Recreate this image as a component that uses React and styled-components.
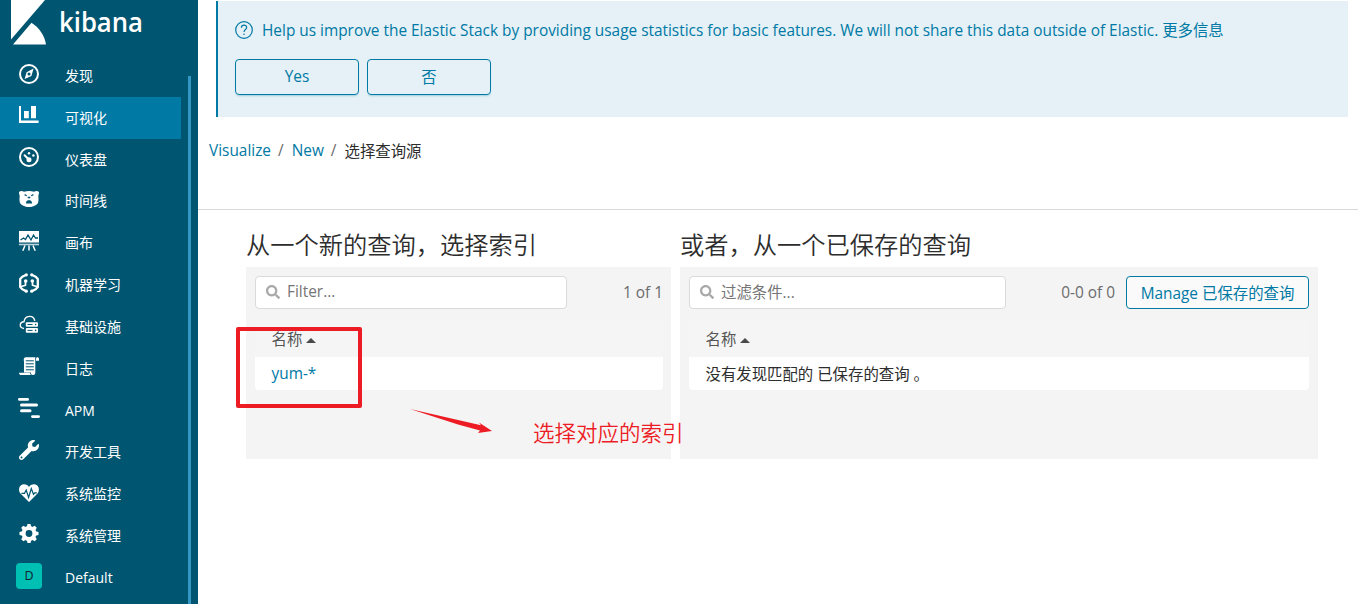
import React from "react";
import styled, { createGlobalStyle } from "styled-components";
import { FaSearch, FaWrench } from "react-icons/fa";

const latin = `"Open Sans", "Noto Sans CJK SC", sans-serif`;
const blue = "#0079a5";

const GlobalStyle = createGlobalStyle`
  * { box-sizing: border-box; }
  body { margin: 0; background: #fff; font-family: ${latin}; font-size: 15.4px; color: #2d2d2d; }
  button, input { font: inherit; }
`;

const Page = styled.div`
  position: relative;
  display: flex;
  width: 1358px;
  height: 604px;
  overflow: hidden;
`;

const Sidebar = styled.nav`
  display: flex;
  flex: 0 0 198px;
  background: #005571;
  color: #fff;
`;
const SidebarContent = styled.div`
  width: 181px;
  margin-right: 7px;
`;
const ScrollThumb = styled.div`
  width: 3px;
  margin-top: 76px;
  background: #3297c2;
`;
const Logo = styled.div`
  height: 55px;
  svg { display: block; }
`;
const NavItem = styled.div`
  display: flex;
  align-items: center;
  height: 41.83px;
  padding-left: 16px;
  background: ${(p) => (p.$active ? blue : "transparent")};
`;
const NavIcon = styled.span`
  display: flex;
  justify-content: center;
  width: 26px;
  margin: 0 23px 4.6px 0;
  svg { display: block; overflow: visible; }
`;
const NavLabel = styled.span`
  font-size: 14px;
  line-height: 20px;
`;
const SpaceBadge = styled.span`
  width: 26px;
  height: 26px;
  border-radius: 4px;
  background: #00bfb3;
  color: #10222b;
  font-size: 12.5px;
  line-height: 25px;
  text-align: center;
`;

const Main = styled.main`
  flex: 1;
  min-width: 0;
`;
const Banner = styled.section`
  height: 116px;
  margin: 1px 10px 0 18px;
  padding: 17px 0 0 17px;
  border-left: 2px solid ${blue};
  background: #e5f1f6;
  color: ${blue};
`;
const BannerTitle = styled.div`
  display: flex;
  align-items: center;
  gap: 9px;
  height: 24px;
  white-space: nowrap;
  span { padding-bottom: 2px; }
  svg { margin-bottom: 1px; }
`;
const BannerActions = styled.div`
  display: flex;
  gap: 8px;
  margin-top: 17px;
`;
const Button = styled.button`
  height: ${(p) => p.$height}px;
  width: ${(p) => p.$width}px;
  padding: 0 0 1px;
  border: 1px solid ${blue};
  border-radius: 4px;
  background: ${(p) => p.$fill || "transparent"};
  box-shadow: ${(p) => (p.$raised ? "0 2px 2px -1px rgba(0, 121, 165, 0.3)" : "none")};
  color: ${blue};
  white-space: nowrap;
`;

const Breadcrumbs = styled.div`
  display: flex;
  align-items: center;
  height: 93px;
  padding: 0 0 25px 11px;
  border-bottom: 1px solid #d9d9d9;
`;
const Crumb = styled.span`
  color: ${(p) => (p.$current ? "#2d2d2d" : blue)};
`;
const Separator = styled.span`
  margin: 0 8px 0 7px;
  color: #6b6b6b;
`;

const Columns = styled.div`
  display: flex;
  gap: 9px;
  padding: 16px 40px 0 48px;
`;
const Column = styled.section`
  width: ${(p) => p.$width}px;
`;
const Title = styled.h2`
  margin: 0;
  height: 41px;
  font-size: 24.25px;
  font-weight: 350;
  line-height: 37px;
  white-space: nowrap;
`;
const Panel = styled.div`
  height: 192px;
  padding: 9px ${(p) => p.$right || 9}px 0 9px;
  background: #f4f4f4;
`;
const Toolbar = styled.div`
  display: flex;
  align-items: center;
  height: 33px;
`;
const Search = styled.div`
  display: flex;
  align-items: center;
  gap: 7px;
  width: ${(p) => p.$width}px;
  height: 33px;
  padding: 0 0 2px 10px;
  border: 1px solid #dadada;
  border-radius: 4px;
  background: #fff;
  color: #757575;
  svg { color: #a9a9a9; }
`;
const Count = styled.span`
  margin: 0 ${(p) => p.$gap || 0}px 0 auto;
  color: #6b6b6b;
`;
const Table = styled.div`
  margin-top: 11px;
  border-radius: 4px;
  overflow: hidden;
`;
const HeaderRow = styled.div`
  display: flex;
  align-items: center;
  gap: 4px;
  height: 37px;
  padding-left: 16.5px;
  background: #f5f5f5;
  color: #555;
`;
const Row = styled.div`
  display: flex;
  align-items: center;
  height: 33px;
  padding-left: 16.5px;
  background: #fff;
  color: ${(p) => (p.$link ? blue : "#2d2d2d")};
`;
const SortUp = styled.span`
  border: 5px solid transparent;
  border-top: 0;
  border-bottom-color: #4a4a4a;
  margin-top: 3px;
`;

const Highlight = styled.div`
  position: absolute;
  left: 236px;
  top: 327px;
  width: 126px;
  height: 81px;
  border: 4px solid #ed1c24;
  border-radius: 2px;
`;
const Arrow = styled.svg`
  position: absolute;
  left: 408px;
  top: 406px;
`;
const Note = styled.div`
  position: absolute;
  left: 533px;
  top: 418px;
  color: #ed1c24;
  font-size: 21.5px;
  font-weight: 350;
  line-height: 30px;
  white-space: nowrap;
`;

const bg = "#005571";
const Glyph = ({ children }) => (
  <svg width="20" height="20" viewBox="0 0 20 20" fill="#fff">{children}</svg>
);

const icons = {
  discover: (
    <Glyph>
      <circle cx="10" cy="10" r="9" fill="none" stroke="#fff" strokeWidth="2" />
      <path fillRule="evenodd" d="M14.6 4.6 12.4 12 5.6 15 7.6 8.2ZM10 8.6a1.5 1.5 0 1 0 0 3 1.5 1.5 0 0 0 0-3Z" />
    </Glyph>
  ),
  visualize: (
    <Glyph>
      <path d="M0 1h2v14.6h17.6V18H0ZM5 6h4.800v7.300H5ZM12 1h5v12.300h-5Z" />
    </Glyph>
  ),
  dashboard: (
    <Glyph>
      <circle cx="10" cy="10" r="9" fill="none" stroke="#fff" strokeWidth="2" />
      <circle cx="10" cy="12.8" r="2.5" />
      <path d="m5.6 8.2 4 4" stroke="#fff" strokeWidth="2" strokeLinecap="round" />
      <circle cx="10" cy="6.2" r="1.2" />
      <circle cx="14.4" cy="8.5" r="1.2" />
    </Glyph>
  ),
  timelion: (
    <Glyph>
      <path d="M0 3C1 1.800 3.500 1.800 5 2.700c3-.9 7-.9 10 0 1.500-.9 4-.9 5 .3 0 1.600-.2 2.600-.7 3.600.3 3 .3 5.600-.3 7.400-1.200 2-5 4-9 4s-7.800-2-9-4C.4 12.200.4 9.600.7 6.600.2 5.600 0 4.600 0 3Z" />
      <path d="m5.600 5.600 2.200 1.100M14.400 5.600l-2.200 1.100" stroke={bg} strokeWidth="1.200" />
      <path d="M8.700 7.700h2.600v1.200l-1.300.6-1.300-.6ZM7 13.800c.3-2 1.500-2.600 3-2.600s2.700.600 3 2.600v.7H7Z" fill={bg} />
    </Glyph>
  ),
  canvas: (
    <Glyph>
      <path d="M0 0h20v11.500H0Z" />
      <path d="m1.500 9 3-2 2 1.500L9 4l3 5 2.500-5L16.500 7h2.500" fill="none" stroke={bg} strokeWidth="1.300" />
      <path d="M0 12.700h20v1.600H0Z" opacity=".75" />
      <path d="m6 14.500-2.200 5.200M14 14.500l2.200 5.200M10 14.500v5" stroke="#fff" strokeWidth="1.500" />
    </Glyph>
  ),
  ml: (
    <Glyph>
      <g fill="none" stroke="#fff" strokeWidth="2.300" strokeLinejoin="round">
        <path d="M7.400 1.700 3.300 3.700 1.200 6v8l2.100 2.300 4.100 2M12.600 1.700l4.100 2L18.800 6v8l-2.100 2.300-4.100 2" />
        <path d="M1.500 13.800 6.500 12.200V8M18.500 13.800l-5-1.600V8" strokeWidth="1.700" />
      </g>
      <circle cx="7.300" cy="1.800" r="1.600" />
      <circle cx="12.700" cy="18.200" r="1.600" />
      <circle cx="7.300" cy="18.200" r="1.600" />
      <circle cx="12.700" cy="1.800" r="1.600" />
      <circle cx="6.700" cy="8" r="1.800" />
      <circle cx="13.300" cy="8" r="1.800" />
    </Glyph>
  ),
  infra: (
    <Glyph>
      <path d="M5 13.500C-.3 12.800.4 6.800 5 6.700 6-.1 14.600-.3 15.800 5.800" fill="none" stroke="#fff" strokeWidth="1.400" />
      <rect x="6.800" y="7.200" width="12.200" height="4.600" rx="1" />
      <rect x="6.800" y="13.100" width="12.200" height="4.600" rx="1" />
      <path d="M8.500 9.500h5M8.500 15.400h5" stroke={bg} strokeWidth="1" />
      <circle cx="16.600" cy="9.500" r=".8" fill={bg} />
      <circle cx="16.600" cy="15.400" r=".8" fill={bg} />
    </Glyph>
  ),
  logs: (
    <Glyph>
      <path d="M6.500 1.200h9.800V16.500c0 1.700-.9 2.500-2.200 2.500-1.500 0-2.300-.8-2.300-2.500H5V5.500C4.400 3.500 4.800 1.200 6.500 1.200Z" />
      <path d="M17 4.800V3c0-2.400 3-2.400 3 0v1.800ZM0 16.700h11c0 1 .3 1.700 1 2.300H2.500C1 19 0 18.200 0 16.700Z" />
      <path d="M6.800 4.800h8M6.800 7.800h8M6.800 10.800h8M6.800 13.800h8" stroke={bg} strokeWidth="1" />
    </Glyph>
  ),
  apm: (
    <Glyph>
      <rect x="-1" y="0" width="11" height="2.800" rx="1.400" />
      <rect x="1" y="5.500" width="18" height="3" rx="1.500" />
      <rect x="1" y="11.300" width="11.500" height="3" rx="1.500" />
      <rect x="12" y="17.200" width="9" height="2.800" rx="1.400" />
    </Glyph>
  ),
  tools: <FaWrench size={20} />,
  monitoring: (
    <Glyph>
      <path d="M10 20 1.500 11.500C-1.400 8 .3 2.200 5 2.200c2.300 0 4 1 5 2.700 1-1.700 2.700-2.700 5-2.700 4.700 0 6.400 5.800 3.500 9.300Z" />
      <path d="M2.500 11.300h3L7.200 8l2.400 7.500L12.300 6.500l2.200 5.800 1.300-1.500h2" fill="none" stroke={bg} strokeWidth="1.200" />
    </Glyph>
  ),
  management: (
    <Glyph>
      <circle cx="10" cy="9.500" r="5.400" fill="none" stroke="#fff" strokeWidth="4" />
      {[0, 45, 90, 135, 180, 225, 270, 315].map((a) => (
        <path key={a} d="M7.700 3 8.500 0h3l.8 3Z" transform={`rotate(${a} 10 9.500)`} />
      ))}
    </Glyph>
  ),
};

const items = [
  ["discover", "发现"],
  ["visualize", "可视化"],
  ["dashboard", "仪表盘"],
  ["timelion", "时间线"],
  ["canvas", "画布"],
  ["ml", "机器学习"],
  ["infra", "基础设施"],
  ["logs", "日志"],
  ["apm", "APM"],
  ["tools", "开发工具"],
  ["monitoring", "系统监控"],
  ["management", "系统管理"],
];

const HelpIcon = () => (
  <svg width="18" height="18" viewBox="0 0 18 18" fill="none" stroke={blue} strokeWidth="1.200">
    <circle cx="9" cy="9" r="8.300" />
    <path d="M6.400 6.800C6.400 3.200 11.700 3.400 11.700 6.500 11.700 8.600 9 8.600 9 11" />
    <circle cx="9" cy="13.200" r=".8" fill={blue} stroke="none" />
  </svg>
);

export default function App() {
  return (
    <Page>
      <GlobalStyle />
      <Sidebar>
        <SidebarContent>
          <Logo>
            <svg width="181" height="55" fill="#fff">
              <path d="M11 0H45L11 39.500Z" />
              <path d="M13 44.500 31.500 22.700C39 27.500 44.500 35 46 44.500Z" />
              <text x="59" y="32" fontFamily="Open Sans" fontWeight="600" fontSize="27.500" textLength="84" lengthAdjust="spacingAndGlyphs">kibana</text>
            </svg>
          </Logo>
          {items.map(([id, label]) => (
            <NavItem key={id} $active={id === "visualize"}>
              <NavIcon>{icons[id]}</NavIcon>
              <NavLabel>{label}</NavLabel>
            </NavItem>
          ))}
          <NavItem>
            <NavIcon><SpaceBadge>D</SpaceBadge></NavIcon>
            <NavLabel>Default</NavLabel>
          </NavItem>
        </SidebarContent>
        <ScrollThumb />
      </Sidebar>

      <Main>
        <Banner>
          <BannerTitle>
            <HelpIcon />
            <span>Help us improve the Elastic Stack by providing usage statistics for basic features. We will not share this data outside of Elastic. 更多信息</span>
          </BannerTitle>
          <BannerActions>
            <Button $width={124} $height={36} $raised>Yes</Button>
            <Button $width={124} $height={36} $raised>否</Button>
          </BannerActions>
        </Banner>

        <Breadcrumbs>
          <Crumb>Visualize</Crumb>
          <Separator>/</Separator>
          <Crumb>New</Crumb>
          <Separator>/</Separator>
          <Crumb $current>选择查询源</Crumb>
        </Breadcrumbs>

        <Columns>
          <Column $width={425}>
            <Title>从一个新的查询，选择索引</Title>
            <Panel $right={8}>
              <Toolbar>
                <Search $width={312}><FaSearch size={14} />Filter...</Search>
                <Count>1 of 1</Count>
              </Toolbar>
              <Table>
                <HeaderRow>名称<SortUp /></HeaderRow>
                <Row $link>yum-*</Row>
              </Table>
            </Panel>
          </Column>
          <Column $width={638}>
            <Title>或者，从一个已保存的查询</Title>
            <Panel>
              <Toolbar>
                <Search $width={317}><FaSearch size={14} />过滤条件...</Search>
                <Count $gap={11}>0-0 of 0</Count>
                <Button $width={183} $height={33} $fill="#fafafa">Manage 已保存的查询</Button>
              </Toolbar>
              <Table>
                <HeaderRow>名称<SortUp /></HeaderRow>
                <Row>没有发现匹配的 已保存的查询 。</Row>
              </Table>
            </Panel>
          </Column>
        </Columns>
      </Main>

      <Highlight />
      <Arrow width="88" height="32" fill="#ed1c24">
        <path d="M2 3 73 19.300 71 16.500 84 25 70 27 72 24.500 50 18.500Z" />
      </Arrow>
      <Note>选择对应的索引</Note>
    </Page>
  );
}
